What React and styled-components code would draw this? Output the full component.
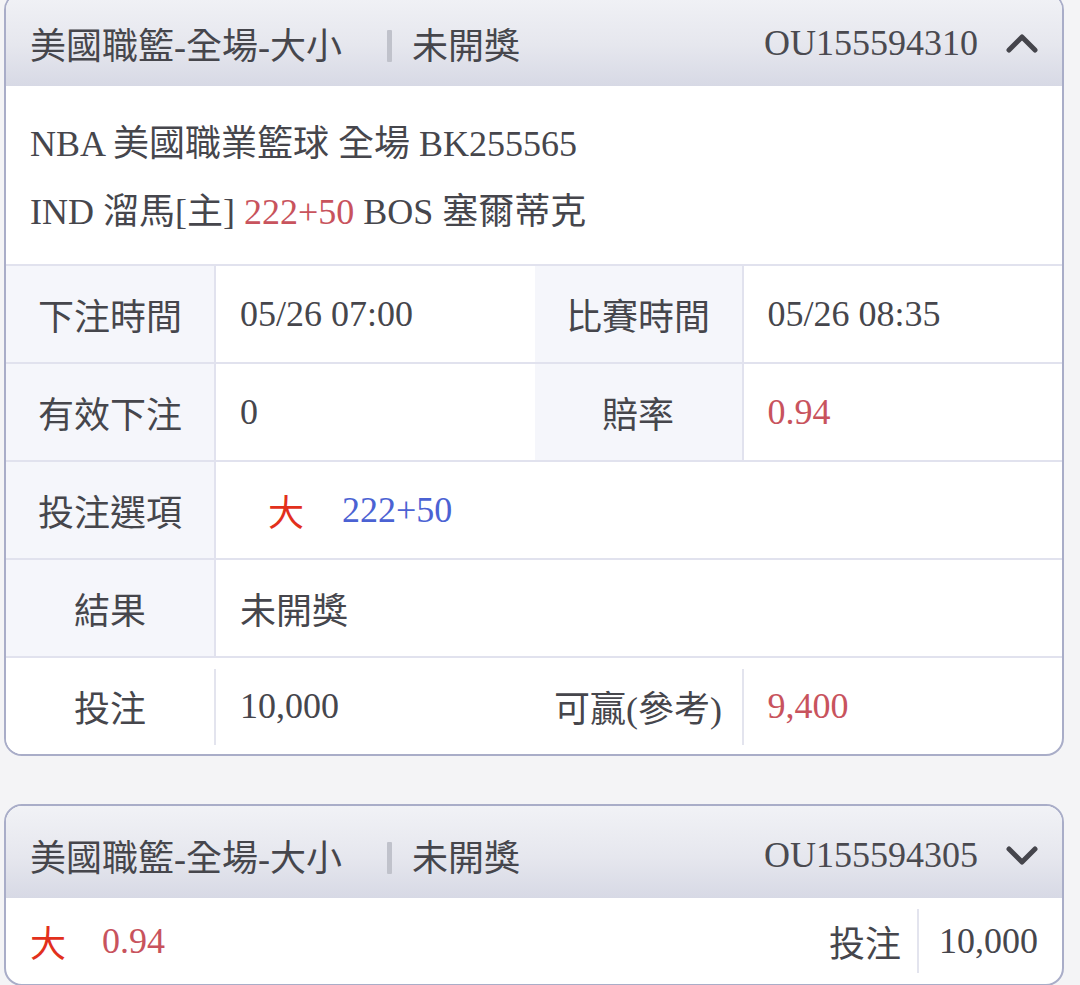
import React from 'react'
import styled, { createGlobalStyle } from 'styled-components'

const GlobalStyle = createGlobalStyle`
    html, body {
        margin: 0;
        padding: 0;
        background: #f4f4f6;
    }
    body {
        font-family: 'Liberation Serif', 'Noto Sans CJK TC', serif;
        color: #46464c;
    }
`

const Chevron = ({ up }) => (
    <ChevronSvg viewBox="0 0 32 20">
        <polyline
            points={up ? '3,17 16,4 29,17' : '3,4 16,17 29,4'}
            fill="none"
            stroke="#45454c"
            strokeWidth="5"
            strokeLinecap="round"
            strokeLinejoin="round"
        />
    </ChevronSvg>
)

const CardHeader = ({ title, status, id, open }) => (
    <Header>
        <Title>{title}</Title>
        <Bar />
        <Status>{status}</Status>
        <OrderId>{id}</OrderId>
        <Chevron up={open} />
    </Header>
)

const App = () => {
    return (
        <Page>
            <GlobalStyle />
            <Card $first>
                <CardHeader title="美國職籃-全場-大小" status="未開獎" id="OU155594310" open />
                <Info>
                    <div>NBA 美國職業籃球 全場 BK255565</div>
                    <div>IND 溜馬[主] <Red>222+50</Red> BOS 塞爾蒂克</div>
                </Info>
                <Table>
                    <Label>下注時間</Label>
                    <Value>05/26 07:00</Value>
                    <Label>比賽時間</Label>
                    <Value>05/26 08:35</Value>

                    <Label>有效下注</Label>
                    <Value>0</Value>
                    <Label>賠率</Label>
                    <Value><Red>0.94</Red></Value>

                    <Label>投注選項</Label>
                    <Value $wide>
                        <Pick>大</Pick>
                        <Blue>222+50</Blue>
                    </Value>

                    <Label>結果</Label>
                    <Value $wide>未開獎</Value>

                    <Label $plain>投注</Label>
                    <Value>10,000</Value>
                    <Label $plain>可贏(參考)</Label>
                    <Value><Red>9,400</Red></Value>
                </Table>
            </Card>

            <Card>
                <CardHeader title="美國職籃-全場-大小" status="未開獎" id="OU155594305" />
                <Summary>
                    <SummaryPick>大</SummaryPick>
                    <Red>0.94</Red>
                    <Spacer />
                    <span>投注</span>
                    <Divider />
                    <span>10,000</span>
                </Summary>
            </Card>
        </Page>
    )
}

const Page = styled.div`
    padding: 0 16px 0 4px;
    overflow: hidden;
    height: 985px;
    box-sizing: border-box;
`

const Card = styled.div`
    margin-top: ${props => (props.$first ? '-8px' : '48px')};
    background: #ffffff;
    border: 2px solid #a9adc8;
    border-radius: 18px;
    overflow: hidden;
    font-size: 36px;
`

const Header = styled.div`
    height: 92px;
    display: flex;
    align-items: center;
    padding: 6px 24px 0 24px;
    box-sizing: border-box;
    background: linear-gradient(180deg, #f1f2f6 0%, #e6e7ee 55%, #d7d9e5 100%);
    white-space: nowrap;
`

const Title = styled.span``

const Bar = styled.span`
    width: 5px;
    height: 32px;
    margin: 6px 20px 0 45px;
    background: #c0c2cb;
    border-radius: 1px;
`

const Status = styled.span`
    flex: 1;
`

const OrderId = styled.span`
    color: #4a4a50;
`

const ChevronSvg = styled.svg`
    width: 32px;
    height: 20px;
    margin-left: 28px;
    flex-shrink: 0;
`

const Info = styled.div`
    padding: 24px 24px 18px 24px;
    line-height: 68px;
    white-space: nowrap;
`

const Red = styled.span`
    color: #c8535d;
`

const Blue = styled.span`
    color: #4b62d3;
`

const Pick = styled.span`
    color: #e2301c;
    margin: 0 38px 0 28px;
`

const Table = styled.div`
    display: grid;
    grid-template-columns: 210px 1fr 209px 1fr;
    grid-auto-rows: 98px;
`

const Label = styled.div`
    display: flex;
    align-items: center;
    justify-content: center;
    border-top: 2px solid #e1e2ee;
    box-sizing: border-box;
    white-space: nowrap;
    background: ${props =>
        props.$plain
            ? 'linear-gradient(#e3e4ee, #e3e4ee) right 11px / 2px 76px no-repeat, #ffffff'
            : '#f5f6fb'};
    border-right: ${props => (props.$plain ? 'none' : '2px solid #e1e2ee')};
    padding-right: ${props => (props.$plain ? '2px' : '0')};
`

const Value = styled.div`
    display: flex;
    align-items: center;
    padding-left: 24px;
    border-top: 2px solid #e1e2ee;
    box-sizing: border-box;
    white-space: nowrap;
    grid-column: ${props => (props.$wide ? 'span 3' : 'auto')};
`

const Summary = styled.div`
    height: 86px;
    display: flex;
    align-items: center;
    padding: 0 24px;
    white-space: nowrap;
`

const SummaryPick = styled.span`
    color: #e2301c;
    margin-right: 36px;
`

const Spacer = styled.span`
    flex: 1;
`

const Divider = styled.span`
    width: 2px;
    height: 64px;
    margin: 0 20px 0 16px;
    background: #e3e4ee;
`

export default App
